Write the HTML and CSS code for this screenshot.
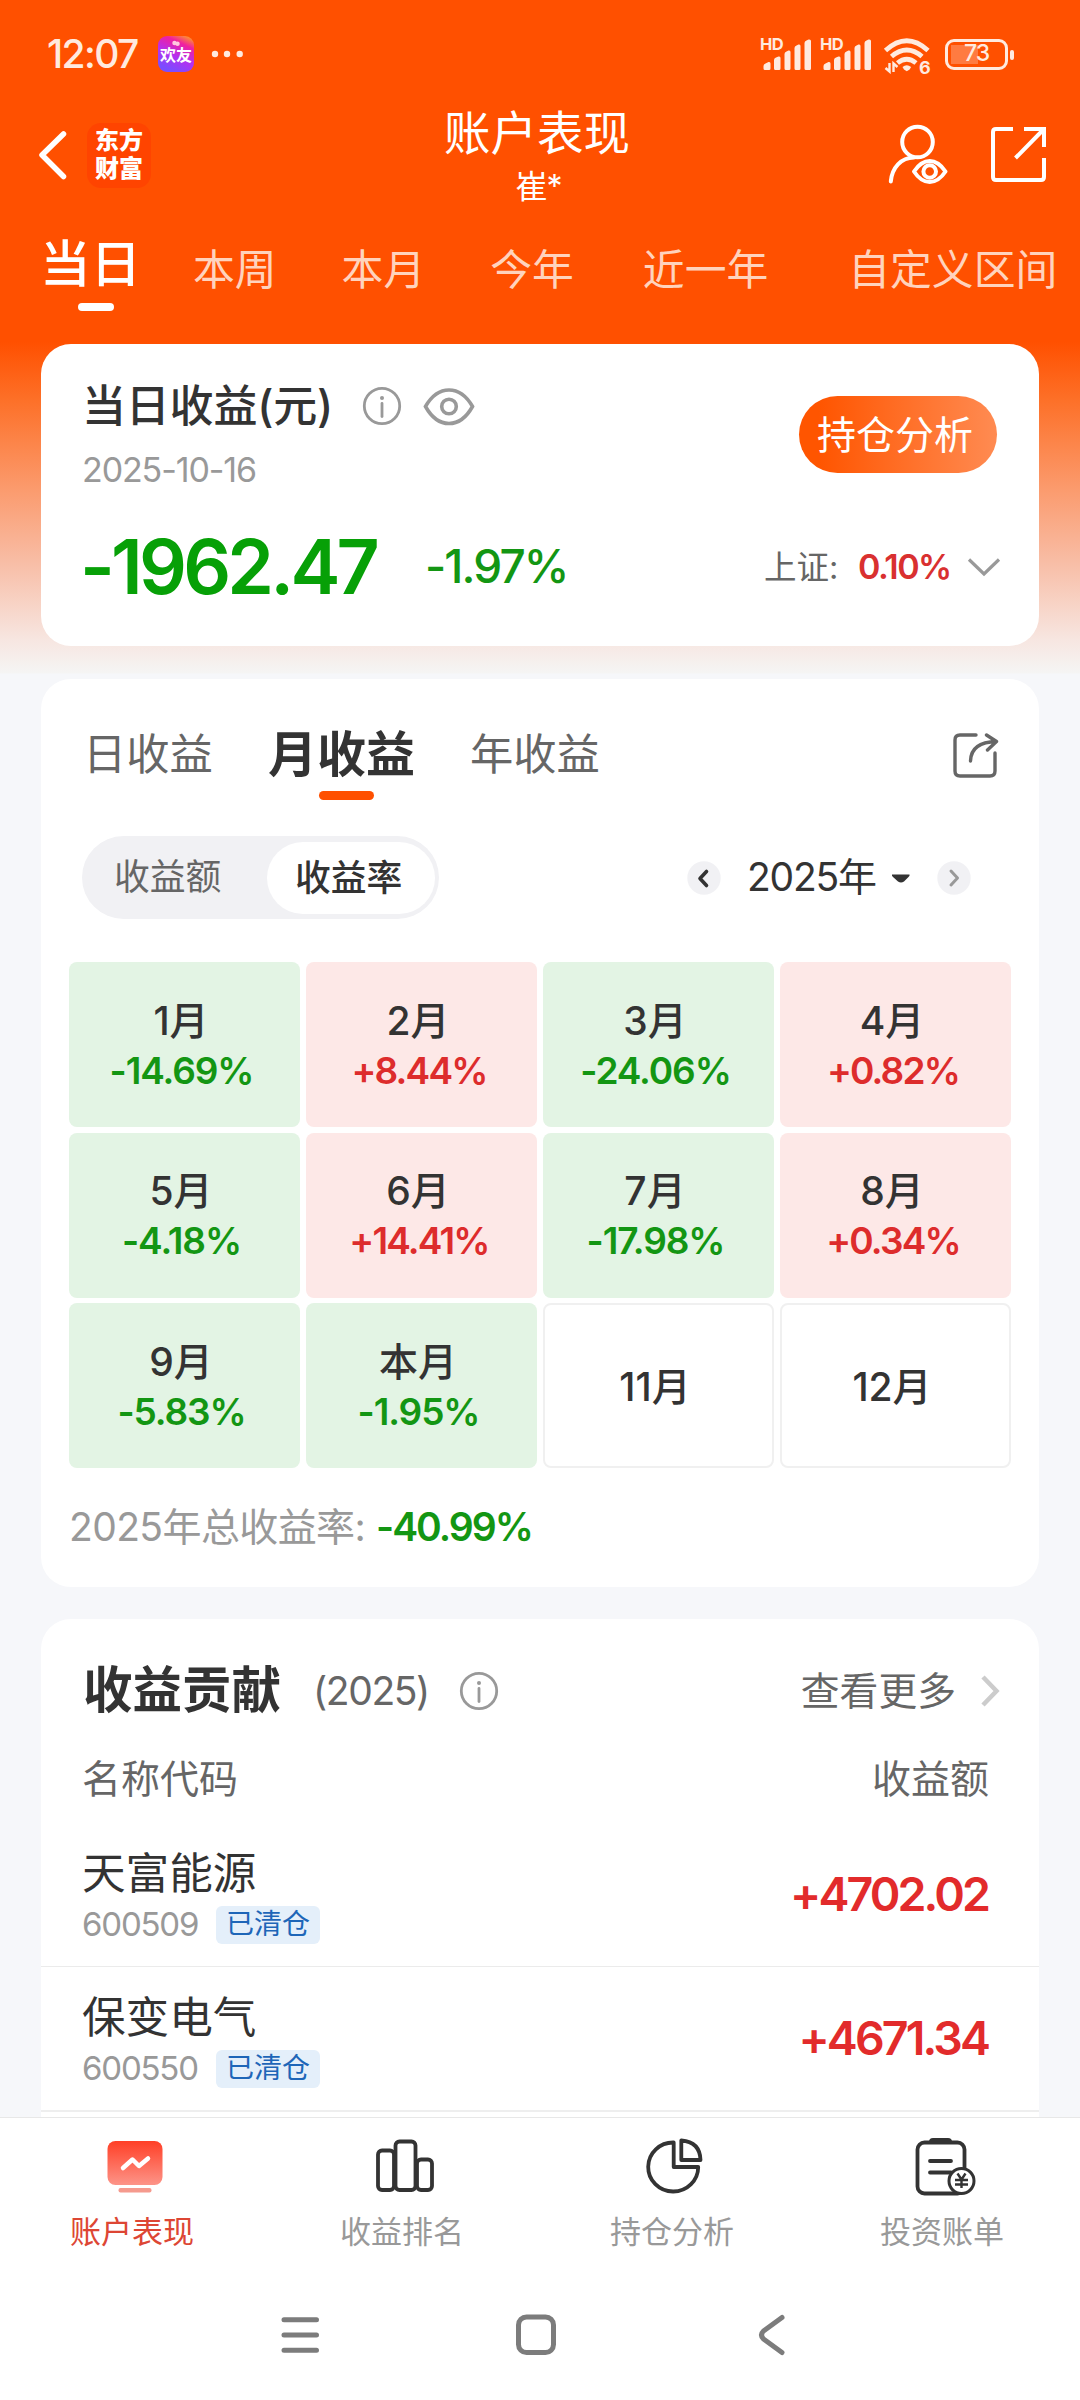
FILE: index.html
```html
<!DOCTYPE html>
<html lang="zh-CN">
<head>
<meta charset="utf-8">
<title>账户表现</title>
<link rel="stylesheet" href="styles.css">
</head>
<body>
<div class="screen">
  <div class="status">
    <span class="clock">12:07</span>
    <span class="app-badge"><svg class="cloud" viewBox="0 0 12 8" width="10" height="6"><circle cx="4" cy="4" r="3"/><circle cx="8" cy="5" r="3"/></svg><span>欢友</span></span>
    <svg class="dots" viewBox="211 50 33 8" width="33" height="8"><circle cx="215" cy="54" r="3.2"/><circle cx="227" cy="54" r="3.2"/><circle cx="239.700" cy="54" r="3.200"/></svg>
    <div class="status-right">
      <div class="signal"><span>HD</span><svg viewBox="763 38 50 33" width="50" height="33"><path d="M763.500 66q0-2 2-2.500l3-1.500q2-.5 2 1.500v5q0 1.500-1.500 1.500h-4q-1.500 0-1.500-1.500zM774 60q0-2 2-2.500l2.500-1q2-.5 2 1.500v10.500q0 1.500-1.500 1.500h-3.500q-1.500 0-1.500-1.500zM784.500 54q0-2 2-2.500l2-1q2-.5 2 1.500v16.500q0 1.500-1.500 1.500h-3q-1.500 0-1.500-1.500zM794.500 48q0-2 2-2.500l2-1q2-.5 2 1.500v22.500q0 1.500-1.500 1.500h-3q-1.500 0-1.500-1.500zM804.500 43q0-2 2-2.500l2-1q2.500-.5 2.500 1.500v27.500q0 1.500-1.500 1.500h-3.500q-1.500 0-1.500-1.500z"/></svg></div>
      <div class="signal"><span>HD</span><svg viewBox="763 38 50 33" width="50" height="33"><path d="M763.500 66q0-2 2-2.500l3-1.500q2-.5 2 1.500v5q0 1.500-1.500 1.500h-4q-1.500 0-1.500-1.500zM774 60q0-2 2-2.500l2.500-1q2-.5 2 1.500v10.500q0 1.500-1.500 1.500h-3.500q-1.500 0-1.500-1.500zM784.500 54q0-2 2-2.500l2-1q2-.5 2 1.500v16.500q0 1.500-1.500 1.500h-3q-1.500 0-1.500-1.500zM794.500 48q0-2 2-2.500l2-1q2-.5 2 1.500v22.500q0 1.500-1.500 1.500h-3q-1.500 0-1.500-1.500zM804.500 43q0-2 2-2.500l2-1q2.500-.5 2.500 1.500v27.500q0 1.500-1.500 1.500h-3.500q-1.500 0-1.500-1.500z"/></svg></div>
      <div class="wifi">
        <svg viewBox="883 34 48 40" width="48" height="40"><g fill="none" stroke="#ffeadf" stroke-width="4.800"><path d="M885.500 50.500Q906.800 31 928 50.500"/><path d="M891.500 56.500Q906.800 43.500 922 56.500"/><path d="M897.500 63Q906.800 55.500 916 63"/></g><path fill="#ffeadf" d="M902.500 67q4.300-3.500 8.600 0l-1.500 2.500-2.800 1.800-2.800-1.800z"/><path d="M889.500 63v8.500l-4-3.500M893.500 72v-8.500l4 3.500" fill="none" stroke="#ffeadf" stroke-width="2.400"/></svg>
        <span>6</span>
      </div>
      <div class="battery"><span>73</span></div>
    </div>
  </div>

  <header class="head">
    <svg class="back" viewBox="37 129 32 52" width="32" height="52"><path d="M63.500 134L42 155l21.500 21.500"/></svg>
    <div class="brand"><span>东方</span><span>财富</span></div>
    <div class="title"><h1>账户表现</h1><p>崔*</p></div>
    <svg class="ic-user" viewBox="886 123 64 64" width="64" height="64"><circle cx="917.500" cy="142" r="15.300"/><path d="M890.800 181.500C892 168 901 157.500 914 157.500"/><path class="eye-bg" d="M914 171.500Q921 161 929.700 161T945.500 171.500Q938.500 182 929.700 182T914 171.500z"/><circle cx="929.700" cy="171.500" r="6.300"/></svg>
    <svg class="ic-open" viewBox="989 125 60 60" width="60" height="60"><path d="M1013 129h-17q-3 0-3 3v45q0 3 3 3h45q3 0 3-3v-19M1024 129h20v18M1044 129l-28.500 29"/></svg>
  </header>

  <nav class="range">
    <a class="on">当日</a><a class="r2">本周</a><a class="r3">本月</a><a class="r4">今年</a><a class="r5">近一年</a><a class="r6">自定义区间</a>
  </nav>

  <section class="card today">
    <div class="today-top">
      <div>
        <div class="today-title"><h2>当日收益(元)</h2>
          <svg class="info" viewBox="0 0 40 40" width="40" height="40"><circle cx="20" cy="20" r="17.700"/><path d="M20 17.500v13"/><circle class="dot" cx="20" cy="12" r="2"/></svg>
          <svg class="eye" viewBox="422 384 54 45" width="54" height="45"><path d="M425.500 406.500Q435 390 449 390t23.500 16.500Q463 423.500 449 423.500t-23.500-17z"/><circle cx="449" cy="406.500" r="7.300"/></svg>
        </div>
        <p class="date">2025-10-16</p>
      </div>
      <a class="btn">持仓分析</a>
    </div>
    <div class="today-num">
      <span class="amount">-1962.47</span><span class="pct">-1.97%</span>
      <span class="idx">上证:</span><span class="idx-v">0.10%</span>
      <svg class="down" viewBox="966 555 36 24" width="36" height="24"><path d="M969 559.500l15 14.500 15-14.500"/></svg>
    </div>
  </section>

  <section class="card cal">
    <div class="cal-tabs"><a>日收益</a><a class="on">月收益</a><a class="y">年收益</a>
      <svg class="share" viewBox="951 730 50 50" width="50" height="50"><path d="M976 735h-16q-5 0-5 5v31q0 5 5 5h30q5 0 5-5v-18M970.500 761q.5-19 26-19.500M986.500 735l10 6.500-9 8.500"/></svg>
    </div>
    <div class="cal-ctl">
      <div class="seg"><a>收益额</a><a class="on">收益率</a></div>
      <svg class="circ" viewBox="688 860 34 34" width="34" height="34"><circle cx="705" cy="877" r="16.700"/><path class="dark" d="M707.500 870.500l-6.500 7 6.500 7"/></svg>
      <span class="year">2025年</span>
      <svg class="caret" viewBox="892 871 20 12" width="20" height="12"><path d="M893 873.500h17.500q.5 1-1 2.500l-4.500 4.500q-3 2-6 0l-5-4.500q-1.500-1.500-1-2.500z"/></svg>
      <svg class="circ" viewBox="937 860 34 34" width="34" height="34"><circle cx="954" cy="877" r="16.700"/><path class="light" d="M951 870l6.500 7-6.500 7"/></svg>
    </div>
    <div class="grid">
      <div class="cell dn"><b>1月</b><i>-14.69%</i></div><div class="cell up"><b>2月</b><i>+8.44%</i></div><div class="cell dn"><b>3月</b><i>-24.06%</i></div><div class="cell up"><b>4月</b><i>+0.82%</i></div>
      <div class="cell dn"><b>5月</b><i>-4.18%</i></div><div class="cell up"><b>6月</b><i>+14.41%</i></div><div class="cell dn"><b>7月</b><i>-17.98%</i></div><div class="cell up"><b>8月</b><i>+0.34%</i></div>
      <div class="cell dn"><b>9月</b><i>-5.83%</i></div><div class="cell dn"><b>本月</b><i>-1.95%</i></div><div class="cell none"><b>11月</b></div><div class="cell none"><b>12月</b></div>
    </div>
    <p class="total"><span class="total-l">2025年总收益率:</span><span class="total-v">-40.99%</span></p>
  </section>

  <section class="card contrib">
    <div class="con-head"><h2>收益贡献</h2><span class="yr">(2025)</span>
      <svg class="info" viewBox="0 0 40 40" width="40" height="40"><circle cx="20" cy="20" r="17.700"/><path d="M20 17.500v13"/><circle class="dot" cx="20" cy="12" r="2"/></svg>
      <span class="more">查看更多</span>
      <svg class="next" viewBox="980 1673 20 36" width="20" height="36"><path d="M983 1677l13.500 14-13.500 14"/></svg>
    </div>
    <div class="con-cols"><span>名称代码</span><span>收益额</span></div>
    <div class="row"><div><p class="name">天富能源</p><p class="code"><span>600509</span><em>已清仓</em></p></div><strong>+4702.02</strong></div>
    <div class="row last"><div><p class="name">保变电气</p><p class="code"><span>600550</span><em>已清仓</em></p></div><strong>+4671.34</strong></div>
  </section>

  <nav class="tabbar">
    <a class="on"><svg viewBox="103 2133 64 64" width="64" height="64"><defs><linearGradient id="g" x1="0" y1="0" x2="0" y2="1"><stop offset="0" stop-color="#ff3f26"/><stop offset="1" stop-color="#fd9488"/></linearGradient></defs><rect x="107.500" y="2141" width="55" height="44" rx="8" fill="url(#g)"/><rect x="118.500" y="2188" width="33" height="4.500" rx="2" fill="#f59a8e"/><path d="M123 2168l9.500-8.500 6.500 6.500 9-7.500" fill="none" stroke="#fff" stroke-width="4.500" stroke-linecap="round" stroke-linejoin="round"/></svg><span>账户表现</span></a>
    <a><svg class="ln" viewBox="373 2133 64 64" width="64" height="64"><rect x="378" y="2150.500" width="16" height="39.500" rx="4"/><rect x="395.500" y="2141.500" width="20" height="48.500" rx="4"/><rect x="417" y="2159.500" width="15" height="30.500" rx="4"/></svg><span>收益排名</span></a>
    <a><svg class="ln" viewBox="643 2133 64 64" width="64" height="64"><path d="M673.700 2142.500v24.500h24.500a25 24.500 0 1 1-24.500-24.500z"/><path d="M681.300 2140.500v19.500h19.200q-.5-18-19.200-19.500z"/></svg><span>持仓分析</span></a>
    <a><svg class="ln" viewBox="913 2133 64 64" width="64" height="64"><rect x="917.500" y="2142.500" width="47" height="51" rx="7"/><path class="fill" d="M929 2142q0-4 4-4h15q4 0 4 4v2h-23z"/><path d="M930 2161h21M930 2172.500h21" stroke-linecap="round"/><circle class="coin" cx="961.500" cy="2181" r="12.500"/><path class="yen" d="M957.500 2173.500l4 6 4-6M961.500 2179.500v8.500M955 2180h13M955 2184.500h13"/></svg><span>投资账单</span></a>
  </nav>
  <div class="sysnav">
    <svg viewBox="275 2310 50 50" width="50" height="50"><path d="M284 2319.700h32.500M284 2335h32.500M284 2350.300h32.500"/></svg>
    <svg viewBox="511 2310 50 50" width="50" height="50"><rect x="518.500" y="2317" width="35" height="35.500" rx="8"/></svg>
    <svg viewBox="747 2310 50 50" width="50" height="50"><path d="M782 2317.500l-18.500 13.500q-4 4 0 8l18.500 13.500"/></svg>
  </div>
</div>
</body>
</html>
```

FILE: styles.css
```css
* { box-sizing: border-box; }
body, h1, h2, p { margin: 0; font-weight: 400; }
b, i, em { font-style: normal; }
svg { display: block; flex: none; }
body { width: 1080px; height: 2400px; overflow: hidden; font-family: Inter, "Noto Sans CJK SC", sans-serif; line-height: 1.2; color: #333; }
.screen { width: 1080px; height: 2400px; display: flex; flex-direction: column; white-space: nowrap;
  background: linear-gradient(#ff5000 0, #ff5000 342px, #fd7028 400px, #fb9b6e 490px, #f8bca4 560px, #f7e6e1 640px, #f5f5f4 673px, #f6f7fa 674px); }

.status { height: 105px; padding: 3px 72px 0 47px; display: flex; align-items: center; color: #ffeadf; }
.clock { width: 111px; font-size: 39px; font-weight: 500; letter-spacing: -1.6px; }
.app-badge { width: 36px; height: 36px; border-radius: 9px; display: flex; flex-direction: column; align-items: center; justify-content: center; color: #fff; font-size: 16px; font-weight: 700; line-height: 18px;
  background: linear-gradient(25deg, #7b4cff 15%, #b430f0 45%, #f0209f 75%, #ff9a28 95%); }
.app-badge svg { fill: #ffc7e0; margin-top: -4px; }
.dots { margin-left: 17px; fill: #ffeadf; }
.status-right { margin-left: auto; display: flex; align-items: center; }
.signal { position: relative; width: 60px; padding-left: 2px; height: 33px; }
.signal span { position: absolute; left: -1px; top: 0; font-size: 16.5px; line-height: 12px; font-weight: 700; letter-spacing: -.5px; }
.signal svg { fill: #ffeadf; }
.wifi { position: relative; width: 62px; margin-left: 2px; }
.wifi span { position: absolute; left: 36px; top: 25px; font-size: 18px; line-height: 17px; font-weight: 700; }
.battery { position: relative; width: 63px; height: 31px; border: 3px solid #ffeadf; border-radius: 9px; display: flex; justify-content: center; align-items: center; font-size: 23px; font-weight: 500; letter-spacing: -1px;
  background: linear-gradient(90deg, #ff7b41 27px, transparent 27px) 3px 3px / 50px 19px no-repeat; }
.battery::after { content: ""; position: absolute; right: -9px; top: 8px; width: 4px; height: 10px; border-radius: 2px; background: #ffeadf; }

.head { height: 100px; display: flex; align-items: center; padding-left: 37px; color: #fff; }
.head svg { fill: none; stroke: #fff; stroke-width: 4; stroke-linecap: round; stroke-linejoin: round; }
.head .back { stroke-width: 5.5; }
.head .ic-open { stroke-linecap: butt; stroke-linejoin: miter; margin-left: 39px; }
.head .eye-bg { fill: #ff5000; }
.brand { margin-left: 18px; width: 64px; height: 65px; border-radius: 14px; background: #ff4400; display: flex; flex-direction: column; align-items: center; justify-content: center; font-size: 24px; font-weight: 900; line-height: 28px; }
.title { width: 300px; margin-left: 236px; height: 100px; padding-top: 3px; text-align: center; }
.title h1 { font-size: 46.5px; line-height: 50px; }
.title p { font-size: 32px; line-height: 34px; margin-top: 12px; padding-left: 3px; letter-spacing: -1px; }
.ic-user { margin-left: 199px; }

.range { height: 139px; padding-left: 40px; display: flex; font-size: 41.8px; color: #ffd3bd; }
.range a { line-height: 50px; margin-top: 40px; }
.range .on { position: relative; font-size: 50.5px; font-weight: 500; line-height: 60px; margin-top: 29px; color: #fff; }
.range .on::after { content: ""; position: absolute; left: 38px; top: 69px; width: 36px; height: 8px; border-radius: 4px; background: #fff; }
.r2 { margin-left: 52px; } .r3 { margin-left: 65px; } .r4 { margin-left: 65px; } .r5 { margin-left: 69px; } .r6 { margin-left: 80px; }

.card { flex: none; width: 998px; margin-left: 41px; border-radius: 30px; background: #fff; }
.info { fill: none; stroke: #999; stroke-width: 2.8; stroke-linecap: round; }
.info .dot { fill: #999; stroke: none; }
.today { height: 302px; padding: 32px 37px 0 41px; }
.today-top { display: flex; justify-content: space-between; }
.today-title { height: 60px; display: flex; align-items: center; }
.today-title h2 { width: 280px; font-size: 44px; font-weight: 500; letter-spacing: -.2px; }
.eye { margin-left: 20px; fill: none; stroke: #999; stroke-width: 3.6; }
.date { margin-top: 14px; font-size: 34px; line-height: 40px; color: #999; letter-spacing: -1.1px; }
.btn { margin: 20px 5px 0 0; width: 198px; height: 77px; border-radius: 39px; background: linear-gradient(90deg, #ff5500 10%, #ff8b52); color: #fff; font-size: 39px; line-height: 77px; padding-left: 18px; }
.today-num { display: flex; align-items: center; height: 60px; margin-top: 47px; }
.today-num span { flex: none; }
.amount { width: 343px; font-size: 75px; font-weight: 600; letter-spacing: -3.8px; text-indent: -2px; color: #07a007; }
.pct { width: 339px; font-size: 46px; font-weight: 500; letter-spacing: -1.900px; color: #139613; }
.idx { width: 94px; font-size: 32.500px; color: #666; }
.idx-v { width: 108px; font-size: 34px; font-weight: 600; letter-spacing: -1.500px; color: #d93030; }
.down { fill: none; stroke: #999; stroke-width: 3.2; }

.cal { height: 908px; margin-top: 33px; padding: 27px 28px 0; }
.cal-tabs { display: flex; align-items: center; height: 96px; padding: 2px 10px 0 14px; font-size: 43.3px; color: #666; }
.cal-tabs .on { position: relative; margin-left: 55px; font-size: 49px; font-weight: 600; color: #333; }
.cal-tabs .on::after { content: ""; position: absolute; left: 51px; bottom: -16px; width: 55px; height: 9px; border-radius: 5px; background: #ff5000; }
.cal-tabs .y { margin-left: 55px; }
.share { margin-left: auto; fill: none; stroke: #666; stroke-width: 3.4; stroke-linecap: round; stroke-linejoin: round; }
.cal-ctl { display: flex; align-items: center; height: 83px; margin-top: 34px; padding-left: 13px; }
.seg { width: 357px; height: 83px; border-radius: 42px; background: #f1f1f4; display: flex; align-items: center; font-size: 35.8px; color: #666; }
.seg a { width: 185px; padding-left: 32px; }
.seg .on { width: 168px; height: 72px; line-height: 72px; border-radius: 36px; background: #fff; padding-left: 28px; font-weight: 500; color: #333; }
.circ { margin-left: 26px; fill: #f1f1f4; }
.seg + .circ { margin-left: 248px; }
.circ path { fill: none; stroke-width: 3.6; stroke-linecap: round; stroke-linejoin: round; }
.circ .dark { stroke: #333; } .circ .light { stroke: #999; stroke-width: 3; }
.year { width: 144px; margin-left: 26px; font-size: 39px; letter-spacing: -1.2px; }
.caret { fill: #333; }
.grid { display: grid; grid-template-columns: repeat(4, 231px); grid-auto-rows: 165px; gap: 5.5px 6px; margin-top: 43px; }
.cell { border-radius: 8px; display: flex; flex-direction: column; align-items: center; justify-content: center; padding: 2px 7px 0 0; }
.cell b { font-size: 39px; font-weight: 500; line-height: 50px; }
.cell i { font-size: 37px; font-weight: 600; line-height: 50px; letter-spacing: -1.1px; }
.dn { background: #e3f4e4; } .dn i { color: #139613; padding-left: 1px; }
.up { background: #fde8e7; } .up i { color: #dd2c2c; padding-left: 2px; letter-spacing: -1.8px; }
.none { border: 2px solid #f0f0f0; }
.total { display: flex; align-items: center; height: 60px; margin-top: 29px; font-size: 39px; }
.total-l { width: 307px; color: #999; letter-spacing: -.6px; }
.total-v { font-weight: 600; color: #139613; letter-spacing: -2px; }

.contrib { margin-top: 32px; height: 498px; border-radius: 30px 30px 0 0; padding-top: 42px; }
.con-head { display: flex; align-items: center; height: 60px; padding: 0 39px 0 42px; }
.con-head h2 { width: 230px; font-size: 49.5px; font-weight: 600; }
.yr { width: 146px; font-size: 39px; letter-spacing: -1.4px; color: #666; }
.more { margin-left: auto; margin-right: 24px; font-size: 38.8px; color: #666; }
.next { fill: none; stroke: #ccc; stroke-width: 4.500; }
.con-cols { display: flex; justify-content: space-between; margin: 33px 0 19px; padding: 0 50px 0 41px; font-size: 39px; line-height: 50px; color: #666; }
.row { height: 144px; display: flex; justify-content: space-between; align-items: center; padding: 1px 50px 0 41px; border-bottom: 1px solid #ebebeb; }
.row.last { height: 145px; border-bottom: 2px solid #eee; }
.row > div { padding-top: 2px; }
.name { font-size: 43.6px; line-height: 50px; }
.code { display: flex; align-items: center; height: 38px; margin-top: 7px; color: #999; }
.code span { width: 134px; font-size: 33px; letter-spacing: -1.2px; }
.code em { width: 104px; height: 38px; border-radius: 6px; background: #e4effa; color: #1e66b8; font-size: 28px; line-height: 36px; text-align: center; }
.row strong { font-size: 46.5px; font-weight: 600; color: #e22b2b; letter-spacing: -2.900px; margin-right: 1px; }

.tabbar { position: relative; flex: none; height: 153px; background: #fff; border-top: 1px solid #e8e8e8; display: flex; }
.tabbar a { width: 270px; padding-top: 15px; display: flex; flex-direction: column; align-items: center; color: #999; }
.tabbar span { margin-top: 15px; padding-right: 6px; font-size: 31px; line-height: 40px; }
.tabbar .on span { color: #dd4634; }
.ln { fill: none; stroke: #333; stroke-width: 3.8; stroke-linejoin: round; }
.ln .fill { fill: #333; stroke: none; }
.ln .coin { fill: #fff; stroke-width: 3; }
.ln .yen { stroke-width: 2.4; }
.sysnav { flex: 1; background: #fff; display: flex; justify-content: center; align-items: center; gap: 186px; padding-right: 8px; }
.sysnav svg { fill: none; stroke: #7c7c7c; stroke-width: 5; stroke-linecap: round; stroke-linejoin: round; }
```
